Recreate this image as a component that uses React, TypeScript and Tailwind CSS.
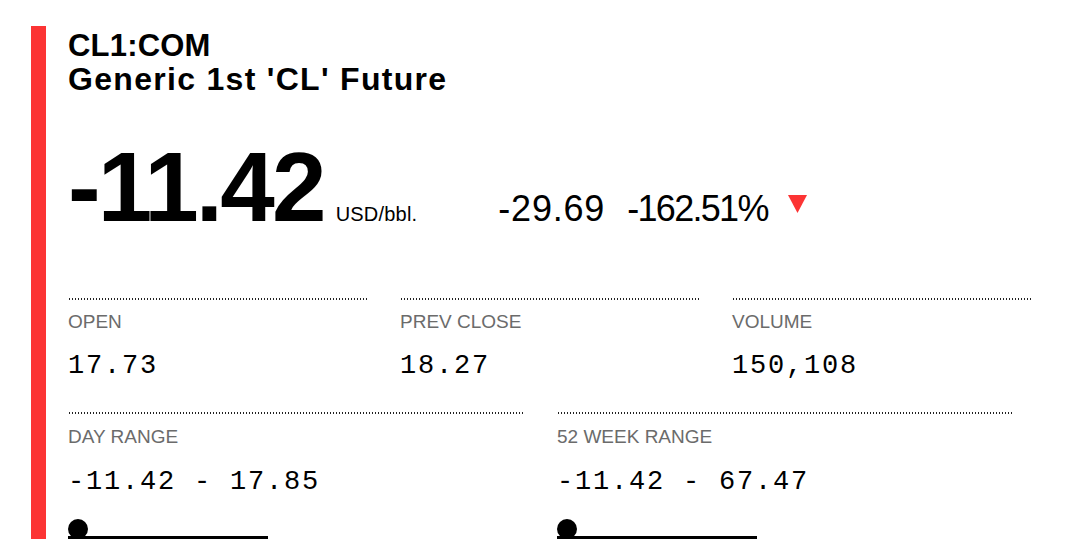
import React from "react";

const sans = "font-['Liberation_Sans',Arial,sans-serif]";
const mono = "font-['Liberation_Mono','Courier_New',monospace]";

function Dotted() {
  return (
    <div className="h-[2px] w-full bg-[radial-gradient(circle,#222_0.8px,transparent_1.1px)] bg-[length:3px_2px] bg-repeat-x" />
  );
}

function Stat({ label, value, width }: { label: string; value: string; width: string }) {
  return (
    <div className={`flex flex-col ${width}`}>
      <Dotted />
      <div className={`${sans} mt-[12px] text-[19px] leading-none text-[#6b6b6b]`}>{label}</div>
      <div className={`${mono} mt-[22px] text-[27px] leading-none tracking-[1.8px] text-black`}>{value}</div>
    </div>
  );
}

function RangeStat({ label, value }: { label: string; value: string }) {
  return (
    <div className="flex w-[457px] flex-col">
      <Dotted />
      <div className={`${sans} mt-[13px] text-[19px] leading-none text-[#6b6b6b]`}>{label}</div>
      <div className={`${mono} mt-[23px] text-[27px] leading-none tracking-[1.8px] text-black`}>{value}</div>
      <div className="mt-[23px] h-[20px] w-[200px] border-b-[3px] border-black">
        <div className="h-[20px] w-[20px] rounded-full bg-black" />
      </div>
    </div>
  );
}

export default function App() {
  return (
    <div className="h-[556px] w-[1066px] overflow-hidden bg-white">
      <div className="flex pl-[31px] pt-[26px]">
        <div className="h-[513px] w-[15px] shrink-0 bg-[#fc3434]" />
        <div className="ml-[22px] flex flex-col">
          <div className={`${sans} mt-[4px] text-[31px] font-bold leading-none tracking-[0.2px] text-black`}>CL1:COM</div>
          <div className={`${sans} mt-[2px] text-[32px] font-bold leading-none tracking-[1.3px] text-black`}>
            Generic 1st 'CL' Future
          </div>
          <div className="mt-[43px] flex items-baseline">
            <div className={`${sans} text-[98px] font-bold leading-none tracking-[-2.8px] text-black`}>-11.42</div>
            <div className={`${sans} ml-[12px] text-[20px] leading-none tracking-[0.2px] text-black`}>USD/bbl.</div>
            <div className={`${sans} ml-[81px] text-[36px] leading-none tracking-[0.8px] text-black`}>-29.69</div>
            <div className={`${sans} ml-[22px] text-[36px] leading-none tracking-[-1.7px] text-black`}>-162.51%</div>
            <svg className="ml-[20px] mt-[57px] self-start" width="19" height="18" viewBox="0 0 19 18">
              <polygon points="0,0 19,0 9.5,18" fill="#fc3434" />
            </svg>
          </div>
          <div className="mt-[62px] flex gap-x-[33px]">
            <Stat label="OPEN" value="17.73" width="w-[299px]" />
            <Stat label="PREV CLOSE" value="18.27" width="w-[299px]" />
            <Stat label="VOLUME" value="150,108" width="w-[299px]" />
          </div>
          <div className="mt-[32px] flex gap-x-[32px]">
            <RangeStat label="DAY RANGE" value="-11.42 - 17.85" />
            <RangeStat label="52 WEEK RANGE" value="-11.42 - 67.47" />
          </div>
        </div>
      </div>
    </div>
  );
}
